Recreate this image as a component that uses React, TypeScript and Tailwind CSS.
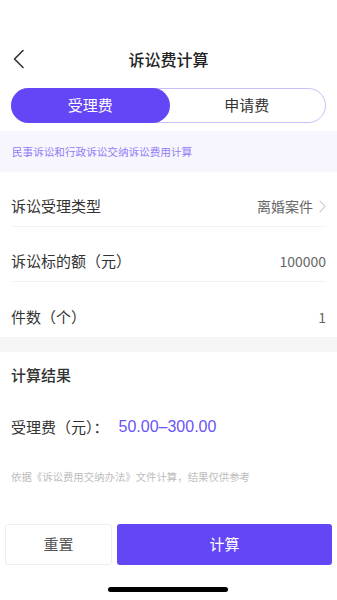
import React, { useState } from 'react';

const FONT = { fontFamily: '"Noto Sans CJK SC", "Noto Sans", sans-serif' };

const ROWS = [
  { label: '诉讼受理类型', value: '离婚案件', arrow: true },
  { label: '诉讼标的额（元）', value: '100000', arrow: false },
  { label: '件数（个）', value: '1', arrow: false },
];

export default function App() {
  const [tab, setTab] = useState(0);

  return (
    <div style={FONT} className="w-full h-[600px] bg-white flex flex-col relative overflow-hidden">
      {/* Header */}
      <div className="mt-[39px] h-[40px] flex items-center relative">
        <button className="absolute left-[12px] top-[10px] p-0">
          <svg width="14" height="20" viewBox="0 0 14 20" fill="none">
            <path d="M11 1.5L2.5 10L11 18.5" stroke="#333" strokeWidth="1.6" strokeLinecap="round" strokeLinejoin="round" />
          </svg>
        </button>
        <h1 className="flex-1 text-center text-[16px] font-medium text-[#222]">诉讼费计算</h1>
      </div>

      {/* Tabs */}
      <div className="mt-[9px] mx-[11px] h-[35px] rounded-full border border-[#c9bffa] flex">
        {['受理费', '申请费'].map((t, i) => (
          <button
            key={t}
            onClick={() => setTab(i)}
            className={`flex-1 rounded-full text-[15px] -m-px ${tab === i ? 'bg-[#6446f6] text-white' : 'text-[#333]'}`}
          >
            {t}
          </button>
        ))}
      </div>

      {/* Info band */}
      <div className="mt-[8px] h-[41px] bg-[#f7f5fe] flex items-center px-[12px]">
        <span className="text-[10.6px] text-[#8e7ef6]">民事诉讼和行政诉讼交纳诉讼费用计算</span>
      </div>

      {/* Form rows */}
      <div>
        {ROWS.map((r, i) => (
          <div key={r.label} className={`h-[55px] mx-[11px] flex items-end pb-[10px] ${i < ROWS.length - 1 ? 'border-b border-[#f3f3f3]' : ''}`}>
            <span className="text-[15px] text-[#333] leading-[20px]">{r.label}</span>
            <span className="ml-auto text-[14px] text-[#666] leading-[20px] flex items-center">
              {r.value}
              {r.arrow && (
                <svg className="ml-[6px]" width="7" height="13" viewBox="0 0 7 13" fill="none">
                  <path d="M1 1L6 6.5L1 12" stroke="#c4c4c4" strokeWidth="1.1" strokeLinecap="round" strokeLinejoin="round" />
                </svg>
              )}
            </span>
          </div>
        ))}
      </div>

      <div className="h-[15px] bg-[#f5f5f5]" />

      {/* Result */}
      <div className="px-[11px]">
        <div className="mt-[13px] text-[15px] font-medium text-[#333] leading-[20px]">计算结果</div>
        <div className="mt-[32px] flex items-center leading-[20px]">
          <span className="text-[15px] text-[#333]">受理费（元）：</span>
          <span className="ml-[10px] text-[16px] text-[#6a55f6]" style={{ fontFamily: '"Liberation Sans", "Noto Sans", sans-serif' }}>50.00–300.00</span>
        </div>
        <div className="mt-[32px] text-[10.4px] text-[#bdbdbd] leading-[16px]">依据《诉讼费用交纳办法》文件计算，结果仅供参考</div>
      </div>

      {/* Buttons */}
      <div className="mt-auto mb-[35px] flex gap-[5px] px-[5px]">
        <button className="w-[107px] h-[41px] rounded-[3px] border border-[#eeeeee] bg-white text-[15px] text-[#555]">重置</button>
        <button className="flex-1 h-[41px] rounded-[3px] bg-[#6446f6] text-[15px] text-white">计算</button>
      </div>

      {/* Home indicator */}
      <div className="absolute bottom-[8px] left-[108px] w-[120px] h-[5px] rounded-full bg-black" />
    </div>
  );
}
